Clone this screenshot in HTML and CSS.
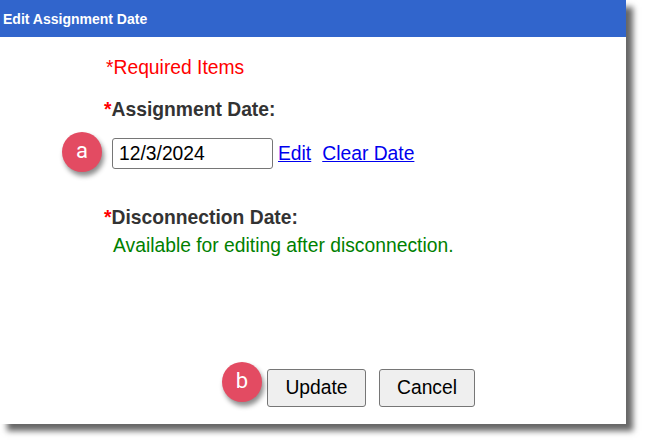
FILE: index.html
```html
<!DOCTYPE html>
<html>
<head>
<meta charset="utf-8">
<link rel="stylesheet" href="styles.css">
</head>
<body>
<div class="dialog">
  <div class="header">Edit Assignment Date</div>
  <div class="content">
    <div class="required">*Required Items</div>
    <div class="label label-first"><span class="star">*</span>Assignment Date:</div>
    <div class="date-row">
      <input class="date-input" type="text" value="12/3/2024">
      <a href="#" class="link link-edit">Edit</a>
      <a href="#" class="link link-clear">Clear Date</a>
    </div>
    <div class="label label-second"><span class="star">*</span>Disconnection Date:</div>
    <div class="note">Available for editing after disconnection.</div>
    <div class="footer">
      <button class="btn btn-update">Update</button>
      <button class="btn btn-cancel">Cancel</button>
    </div>
  </div>
  <span class="badge badge-a">a</span>
  <span class="badge badge-b">b</span>
</div>
</body>
</html>
```

FILE: styles.css
```css
html, body {
  margin: 0;
  padding: 0;
  background: #ffffff;
}
body {
  height: 447px;
  overflow: hidden;
}
.dialog {
  position: relative;
  width: 626px;
  height: 424px;
  background: #ffffff;
  display: flex;
  flex-direction: column;
  box-shadow: 7px 7px 6px rgba(0, 0, 0, 0.6);
  font-family: "Liberation Sans", Arial, sans-serif;
  font-size: 19.3px;
}
.header {
  height: 37px;
  flex: none;
  background: #3165cc;
  color: #ffffff;
  font-family: "Liberation Sans", Arial, sans-serif;
  font-weight: bold;
  font-size: 14px;
  display: flex;
  align-items: center;
  padding-left: 3px;
}
.content {
  flex: 1;
  display: flex;
  flex-direction: column;
  padding-left: 104px;
  padding-bottom: 17px;
}
.required {
  color: #ff0000;
  line-height: 22px;
  margin-top: 20px;
  padding-left: 2px;
}
.label {
  font-weight: bold;
  color: #333333;
  line-height: 22px;
}
.label-first {
  margin-top: 20px;
}
.label-second {
  margin-top: 38px;
}
.star {
  color: #ff0000;
}
.date-row {
  display: flex;
  align-items: center;
  margin-top: 17px;
  padding-left: 8px;
}
.date-input {
  box-sizing: border-box;
  width: 161px;
  height: 31px;
  border: 1px solid #767676;
  border-radius: 3px;
  padding: 0 0 0 6px;
  margin: 0;
  font-family: "Liberation Sans", Arial, sans-serif;
  font-size: 19.3px;
  color: #000000;
  background: #ffffff;
}
.link {
  color: #0000ee;
  text-decoration: underline;
  line-height: 22px;
}
.link-edit {
  margin-left: 5px;
}
.link-clear {
  margin-left: 11px;
}
.note {
  color: #008000;
  line-height: 22px;
  margin-top: 6px;
  padding-left: 9px;
}
.footer {
  margin-top: auto;
  display: flex;
  gap: 13px;
  padding-left: 163px;
}
.btn {
  box-sizing: border-box;
  height: 38px;
  border: 1px solid #767676;
  border-radius: 3px;
  background: #efefef;
  color: #000000;
  font-family: "Liberation Sans", Arial, sans-serif;
  font-size: 19.3px;
  padding: 0;
}
.btn-update {
  width: 99px;
}
.btn-cancel {
  width: 96px;
}
.badge {
  position: absolute;
  width: 40px;
  height: 40px;
  border-radius: 50%;
  background: #e34b62;
  color: #ffffff;
  font-family: "Roboto", "Liberation Sans", sans-serif;
  font-size: 22px;
  line-height: 38px;
  text-align: center;
  box-shadow: 2px 4px 5px rgba(0, 0, 0, 0.45);
}
.badge-a {
  left: 62px;
  top: 132px;
}
.badge-b {
  left: 222px;
  top: 362px;
}
```
